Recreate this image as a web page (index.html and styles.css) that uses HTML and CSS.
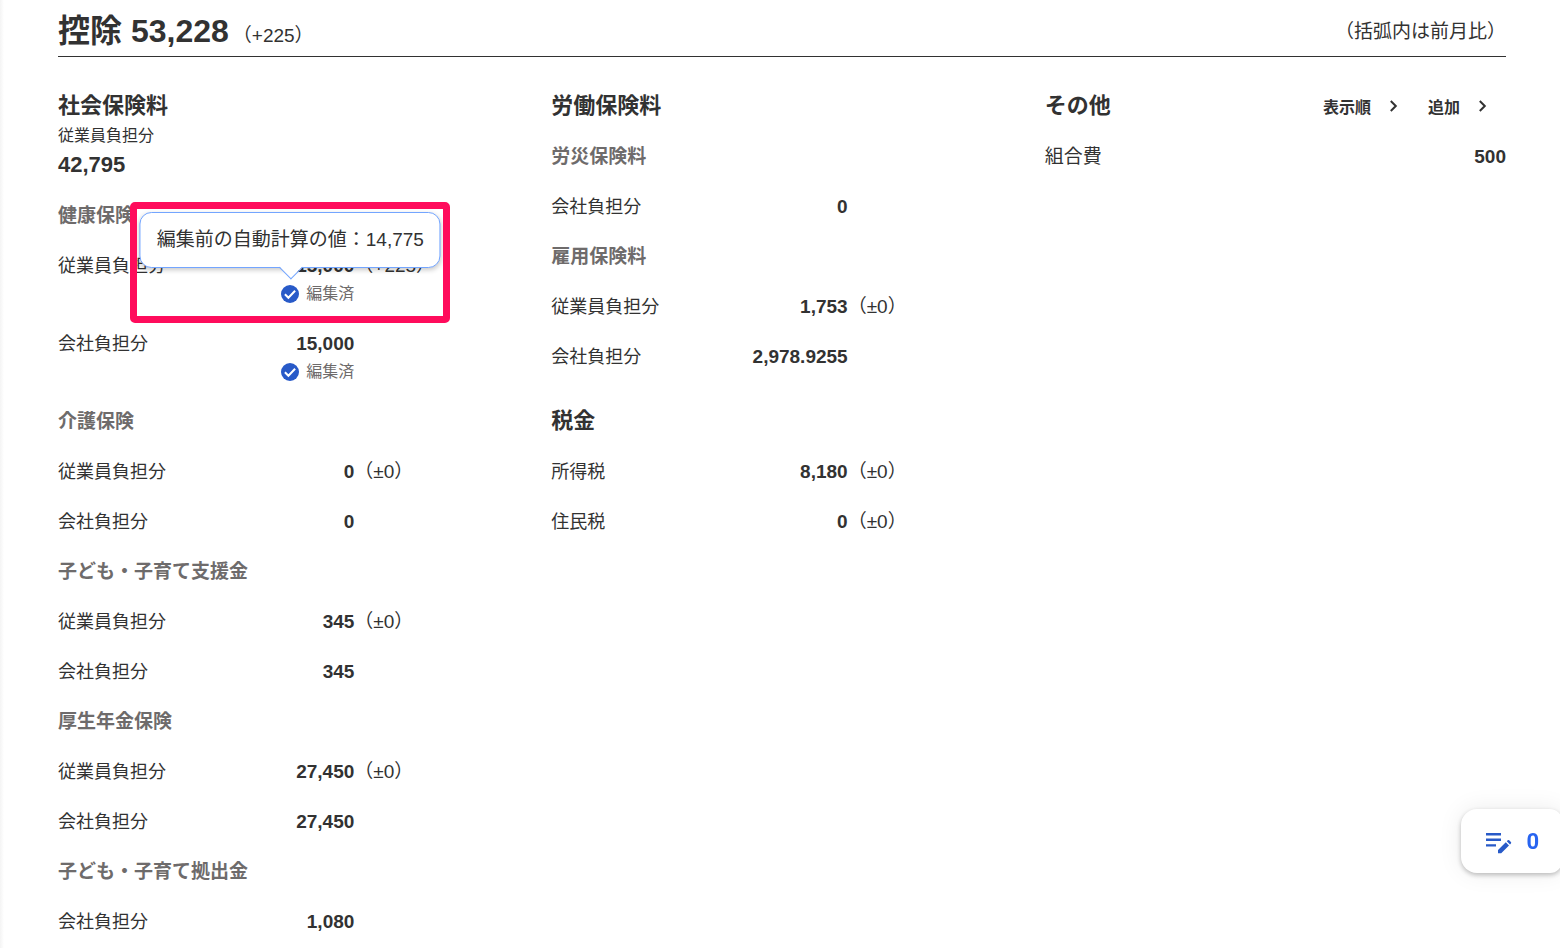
FILE: index.html
```html
<!DOCTYPE html>
<html lang="ja">
<head>
<meta charset="utf-8">
<title>控除</title>
<link rel="stylesheet" href="styles.css">
</head>
<body>
<svg class="defs" aria-hidden="true">
  <symbol id="check" viewBox="0 0 18 18"><circle cx="9" cy="9" r="9" fill="#285ac8"/><path d="M3.9 9.2l3.5 3.5 6.7-7" fill="none" stroke="#fff" stroke-width="2"/></symbol>
  <symbol id="chevron" viewBox="0 0 10 14"><path d="M1.8 2l5 5-5 5" fill="none" stroke="#323232" stroke-width="2"/></symbol>
</svg>
<main class="page">
  <header class="header">
    <h1 class="title">控除 53,228<span class="title-diff">（+225）</span></h1>
    <p class="note">（括弧内は前月比）</p>
  </header>
  <div class="columns">
    <div class="column">
      <section>
        <h2 class="section-title">社会保険料</h2>
        <p class="total-label">従業員負担分</p>
        <p class="total">42,795</p>

        <h3 class="group-title">健康保険</h3>
        <dl class="rows">
          <div class="row"><dt>従業員負担分</dt><dd class="value">15,000</dd><dd class="diff">（+225）</dd>
            <dd class="edited">
              <span class="anchor">
                <svg class="check" aria-hidden="true"><use href="#check"/></svg>
                <span class="tooltip" role="tooltip">編集前の自動計算の値：14,775</span>
                <span class="highlight"></span>
              </span>編集済</dd>
          </div>
          <div class="row"><dt>会社負担分</dt><dd class="value">15,000</dd>
            <dd class="edited"><span class="anchor"><svg class="check" aria-hidden="true"><use href="#check"/></svg></span>編集済</dd>
          </div>
        </dl>

        <h3 class="group-title">介護保険</h3>
        <dl class="rows">
          <div class="row"><dt>従業員負担分</dt><dd class="value">0</dd><dd class="diff">（±0）</dd></div>
          <div class="row"><dt>会社負担分</dt><dd class="value">0</dd></div>
        </dl>

        <h3 class="group-title">子ども・子育て支援金</h3>
        <dl class="rows">
          <div class="row"><dt>従業員負担分</dt><dd class="value">345</dd><dd class="diff">（±0）</dd></div>
          <div class="row"><dt>会社負担分</dt><dd class="value">345</dd></div>
        </dl>

        <h3 class="group-title">厚生年金保険</h3>
        <dl class="rows">
          <div class="row"><dt>従業員負担分</dt><dd class="value">27,450</dd><dd class="diff">（±0）</dd></div>
          <div class="row"><dt>会社負担分</dt><dd class="value">27,450</dd></div>
        </dl>

        <h3 class="group-title">子ども・子育て拠出金</h3>
        <dl class="rows">
          <div class="row"><dt>会社負担分</dt><dd class="value">1,080</dd></div>
        </dl>
      </section>
    </div>

    <div class="column">
      <section>
        <h2 class="section-title spaced">労働保険料</h2>
        <h3 class="group-title">労災保険料</h3>
        <dl class="rows">
          <div class="row"><dt>会社負担分</dt><dd class="value">0</dd></div>
        </dl>
        <h3 class="group-title">雇用保険料</h3>
        <dl class="rows">
          <div class="row"><dt>従業員負担分</dt><dd class="value">1,753</dd><dd class="diff">（±0）</dd></div>
          <div class="row"><dt>会社負担分</dt><dd class="value">2,978.9255</dd></div>
        </dl>
      </section>
      <section>
        <h2 class="section-title spaced">税金</h2>
        <dl class="rows">
          <div class="row"><dt>所得税</dt><dd class="value">8,180</dd><dd class="diff">（±0）</dd></div>
          <div class="row"><dt>住民税</dt><dd class="value">0</dd><dd class="diff">（±0）</dd></div>
        </dl>
      </section>
    </div>

    <div class="column">
      <section>
        <div class="section-head">
          <h2 class="section-title">その他</h2>
          <div class="actions">
            <button class="action" type="button">表示順<svg class="chevron" aria-hidden="true"><use href="#chevron"/></svg></button>
            <button class="action" type="button">追加<svg class="chevron" aria-hidden="true"><use href="#chevron"/></svg></button>
          </div>
        </div>
        <dl class="rows">
          <div class="row wide"><dt>組合費</dt><dd class="value">500</dd></div>
        </dl>
      </section>
    </div>
  </div>
</main>
<button class="memo" type="button" aria-label="メモ 0件">
  <svg class="memo-icon" viewBox="0 -4 26 26" aria-hidden="true">
    <g fill="#285ac8"><path d="M0 1h15v2.4H0zM0 6.6h15V9H0zM0 12.2h10v2.4H0z"/><path d="M12 18l7.8-7.8 3.2 3.2-7.8 7.8H12zM20.8 9.2l.9-.9q.8-.6 1.5 0l1.7 1.7q.7.8 0 1.5l-.9.9z"/></g>
  </svg>
  <span>0</span>
</button>
</body>
</html>
```
FILE: styles.css
```css
* { box-sizing: border-box; }

body {
  margin: 0;
  background: linear-gradient(to right, #f4f4f4, #fff 4px);
  color: #323232;
  font-family: "Liberation Sans", "Noto Sans CJK JP", sans-serif;
  font-size: 19px;
  line-height: 28px;
}

h1, h2, h3, p, dl, dd { margin: 0; }

button {
  border: 0;
  font-family: inherit;
  font-weight: bold;
  cursor: pointer;
}

.defs { position: absolute; width: 0; height: 0; }

.page { padding: 8px 54px 0 58px; }

.header {
  display: flex;
  justify-content: space-between;
  align-items: flex-start;
  padding-bottom: 1px;
  border-bottom: 1px solid #323232;
}

.title { font-size: 32px; line-height: 47px; }
.title-diff { margin-left: 4px; font-size: 19px; font-weight: normal; line-height: 28px; }
.note { padding-top: 10px; }

.columns {
  display: grid;
  grid-template-columns: repeat(3, 1fr);
  gap: 32px;
  padding-top: 33px;
}

.column {
  display: flex;
  flex-direction: column;
  gap: 23px;
}

.section-title { font-size: 22px; line-height: 32px; }
.spaced { padding-bottom: 10px; }
.total-label { padding-top: 2px; font-size: 16px; line-height: 24px; }
.total { padding: 3px 0 12px; font-size: 22px; font-weight: bold; }

.group-title {
  padding: 11px 0;
  color: #6e6b6b;
  font-size: 19px;
}

.row {
  display: grid;
  grid-template-columns: 1fr auto 165px;
  align-items: baseline;
  padding: 11px 0;
}

.row dt { font-size: 18px; }
.value { grid-column: 2; font-weight: bold; text-align: right; }
.wide { grid-template-columns: 1fr auto; }
.wide dt { font-size: 19px; }

.edited {
  grid-column: 1 / 3;
  display: flex;
  justify-content: flex-end;
  align-items: center;
  gap: 7px;
  color: #6e6b6b;
  font-size: 16px;
}

.anchor { position: relative; display: flex; }
.check { width: 18px; height: 18px; }

.tooltip {
  position: absolute;
  bottom: 35px;
  left: 50%;
  z-index: 1;
  padding: 13px 16px;
  border: 1px solid #73a5ff;
  border-radius: 12px;
  background: #fff;
  box-shadow: 0 2px 5px rgb(0 0 0 / 22%);
  color: #323232;
  font-size: 19px;
  white-space: nowrap;
  transform: translateX(-50%);
}

.tooltip::after {
  content: "";
  position: absolute;
  bottom: -9px;
  left: 50%;
  width: 16px;
  height: 16px;
  margin-left: -8px;
  border: solid #73a5ff;
  border-width: 0 1px 1px 0;
  background: linear-gradient(to bottom right, transparent 50%, #fff 50%);
  transform: rotate(45deg);
}

.highlight {
  position: absolute;
  top: -83px;
  left: -151px;
  z-index: 2;
  width: 320px;
  height: 121px;
  border: 7px solid #ff0c5c;
  border-radius: 5px;
}

.section-head {
  display: flex;
  justify-content: space-between;
  align-items: center;
  padding-bottom: 10px;
}

.actions { display: flex; gap: 29px; padding-right: 18px; }

.action {
  display: flex;
  align-items: center;
  gap: 18px;
  padding: 0;
  background: none;
  color: inherit;
  font-size: 16px;
}

.chevron { width: 10px; height: 14px; }

.memo {
  position: fixed;
  right: -2px;
  bottom: 75px;
  display: flex;
  align-items: center;
  gap: 14px;
  height: 64px;
  padding: 0 23px 0 25px;
  border-radius: 16px 12px 12px 16px;
  background: #fff;
  box-shadow: 0 2px 5px rgb(0 0 0 / 25%), 0 0 24px rgb(0 0 0 / 8%);
  color: #2864f0;
  font-family: Roboto, sans-serif;
  font-size: 22px;
}

.memo-icon { width: 26px; height: 26px; }
```
